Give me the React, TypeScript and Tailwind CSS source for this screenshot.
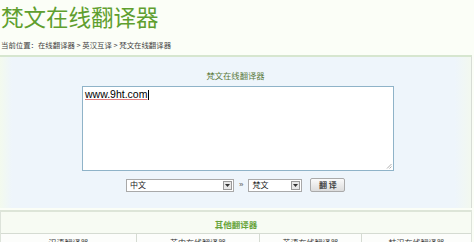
import React from "react";

const cjk = { fontFamily: '"Noto Sans CJK SC", "Liberation Sans", sans-serif' };

function Select({ label, width }: { label: string; width: string }) {
  return (
    <div className={`flex items-center justify-between h-[13px] bg-white border border-[#a9a9a9] ${width}`}>
      <span className="pl-[3px] text-[8px] leading-none text-[#222]" style={cjk}>{label}</span>
      <span className="mr-[1px] w-[9px] h-[9px] border border-[#9a9a9a] bg-[#e8e8e8] flex items-center justify-center">
        <svg width="5" height="3" viewBox="0 0 5 3"><path d="M0 0 L5 0 L2.5 3 Z" fill="#333" /></svg>
      </span>
    </div>
  );
}

export default function App() {
  return (
    <div className="w-[474px] h-[242px] overflow-hidden bg-[#fbfef7]" style={cjk}>
      <div className="h-[33px] pl-[1px] pt-[2px]">
        <h1 className="text-[22.5px] leading-[28px] text-[#5f9f2f]" style={cjk}>梵文在线翻译器</h1>
      </div>
      <div className="h-[22px] flex items-center pl-[1px] pt-[1px] text-[7.4px] text-[#444]">
        当前位置：在线翻译器 &gt; 英汉互译 &gt; 梵文在线翻译器
      </div>
      <div className="w-[472px] border-t-2 border-[#d6e6cf] border-r border-r-[#d7dcd5] bg-[linear-gradient(to_right,#f3faee_0px,#eef5fb_12px,#eef5fb_455px,#f2f8f0_470px)] h-[153px] flex flex-col">
        <div className="h-[29px] flex items-end justify-center pb-[5px] text-[8.3px] text-[#5b7a3b]">梵文在线翻译器</div>
        <div className="pl-[82px]">
          <div className="w-[312px] h-[85px] bg-white border border-[#8fb3c8] relative">
            <span className="absolute left-[2px] top-[2px] text-[10.5px] leading-none text-black underline decoration-[#e08080] decoration-[0.5px]" style={{ fontFamily: '"Liberation Sans", Arial, sans-serif' }}>
              www.9ht.com<span className="inline-block w-[1px] h-[10px] bg-black align-middle ml-[0.5px]" />
            </span>
            <svg className="absolute right-[1px] bottom-[1px]" width="6" height="6" viewBox="0 0 6 6">
              <path d="M5.5 1 L1 5.5 M5.5 3.5 L3.5 5.5" stroke="#999" strokeWidth="0.8" />
            </svg>
          </div>
        </div>
        <div className="flex items-center pl-[126px] mt-[7px]">
          <Select label="中文" width="w-[108px]" />
          <span className="mx-[5px] text-[8px] text-[#555]" style={{ fontFamily: '"Liberation Sans", sans-serif' }}>»</span>
          <Select label="梵文" width="w-[54px]" />
          <button className="ml-[8px] w-[35px] h-[14px] border border-[#aaa] rounded-[2px] bg-[linear-gradient(#fafafa,#dcdcdc)] text-[8px] leading-none font-bold text-[#444]" style={cjk}>
            翻 译
          </button>
        </div>
      </div>
      <div className="h-[2px]" />
      <div className="w-[472px] border-t-2 border-[#dde5d8] border-x border-x-[#dde3da] bg-[#f7fbf3]">
        <div className="h-[21px] flex items-center justify-center pt-[3px] text-[8.5px] font-bold text-[#66a33a]">其他翻译器</div>
        <div className="flex border-t border-[#d5dbd2] h-[20px] text-[8px] text-[#333] bg-[#fcfdfb]">
          <div className="w-[136px] border-r border-[#d5dbd2] flex justify-center pt-[3px]">汉语翻译器</div>
          <div className="w-[123px] border-r border-[#d5dbd2] flex justify-center pt-[3px]">英中在线翻译器</div>
          <div className="w-[102px] border-r border-[#d5dbd2] flex justify-center pt-[3px]">英语在线翻译器</div>
          <div className="flex-1 flex justify-center pt-[3px]">韩汉在线翻译器</div>
        </div>
      </div>
    </div>
  );
}
